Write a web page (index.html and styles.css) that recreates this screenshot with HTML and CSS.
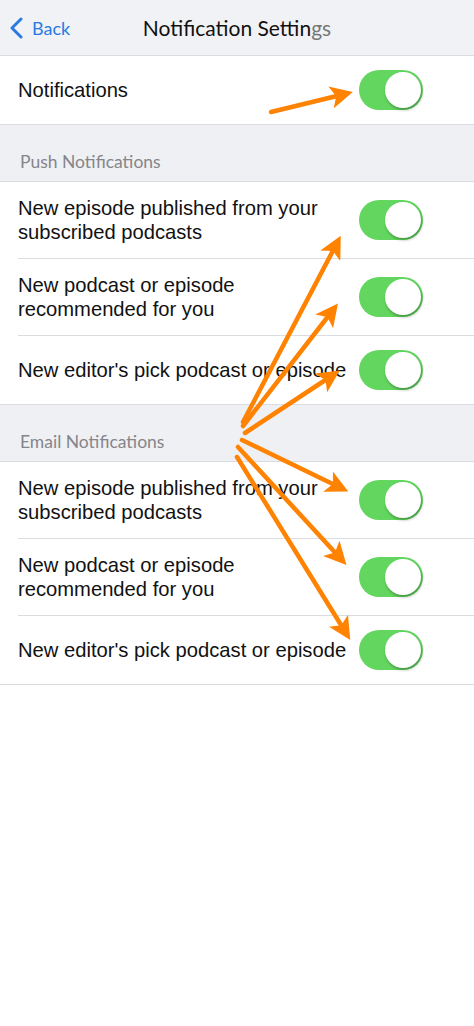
FILE: index.html
```html
<!DOCTYPE html>
<html lang="en">
<head>
  <meta charset="UTF-8">
  <title>Notification Settings</title>
  <link rel="stylesheet" href="styles.css">
</head>
<body>

  <div class="page">
    <div class="navbar">
      <a class="back">
        <svg class="chevron" width="14" height="22" viewBox="0 0 14 22">
          <path d="M12 2 L3 11 L12 20" fill="none" stroke="#2a7ae2" stroke-width="3" stroke-linecap="round" stroke-linejoin="round"/>
        </svg>
        <span>Back</span>
      </a>
      <div class="title">Notification Settin<span class="faded">gs</span></div>
    </div>

    <div class="group">
      <div class="row single">
        <div class="label">Notifications</div>
        <div class="toggle"></div>
      </div>
    </div>

    <div class="section">Push Notifications</div>
    <div class="group">
      <div class="row">
        <div class="label">New episode published from your subscribed podcasts</div>
        <div class="toggle"></div>
      </div>
      <div class="row">
        <div class="label">New podcast or episode<br>recommended for you</div>
        <div class="toggle"></div>
      </div>
      <div class="row single">
        <div class="label">New editor's pick podcast or episode</div>
        <div class="toggle"></div>
      </div>
    </div>

    <div class="section">Email Notifications</div>
    <div class="group">
      <div class="row">
        <div class="label">New episode published from your subscribed podcasts</div>
        <div class="toggle"></div>
      </div>
      <div class="row">
        <div class="label">New podcast or episode<br>recommended for you</div>
        <div class="toggle"></div>
      </div>
      <div class="row single">
        <div class="label">New editor's pick podcast or episode</div>
        <div class="toggle"></div>
      </div>
    </div>

    <!-- annotation arrows drawn over the screenshot -->
    <svg class="arrows" width="474" height="1026" viewBox="0 0 474 1026">
      <defs>
        <marker id="head" markerWidth="5" markerHeight="5" refX="3.2" refY="2.5" orient="auto" markerUnits="strokeWidth">
          <path d="M0 0 L5 2.5 L0 5 L1.2 2.5 Z" fill="#ff8200"/>
        </marker>
      </defs>
      <g stroke="#ff8200" stroke-width="4.5" stroke-linecap="round" fill="none" marker-end="url(#head)">
        <line x1="271" y1="112" x2="345" y2="94"/>
        <line x1="243" y1="422" x2="337" y2="243"/>
        <line x1="243" y1="426" x2="333" y2="310"/>
        <line x1="245" y1="433" x2="333" y2="375"/>
        <line x1="242" y1="440" x2="341" y2="488"/>
        <line x1="238" y1="447" x2="341" y2="559"/>
        <line x1="237" y1="457" x2="346" y2="633"/>
      </g>
    </svg>
  </div>

</body>
</html>
```

FILE: styles.css
```css
body {
  margin: 0;
  background: #fff;
  font-family: "Liberation Sans", Arial, sans-serif;
  color: #111;
}
.page {
  position: relative;
  width: 474px;
  min-height: 1026px;
}
.navbar {
  position: relative;
  height: 55px;
  background: #f1f2f6;
  border-bottom: 1px solid #dcdce0;
  display: flex;
  align-items: center;
  justify-content: center;
  font-family: Lato, "Open Sans", sans-serif;
}
.back {
  position: absolute;
  left: 9px;
  top: 17px;
  display: flex;
  align-items: center;
  gap: 9px;
  color: #2a7ae2;
  font-size: 18px;
}
.title {
  font-size: 21px;
  color: #111;
}
.faded {
  color: #777;
}
.group {
  background: #fff;
  border-bottom: 1px solid #dcdce0;
}
.section {
  height: 57px;
  background: #eff0f4;
  border-bottom: 1px solid #dcdce0;
  display: flex;
  align-items: flex-end;
  padding: 0 20px 9px;
  box-sizing: border-box;
  font-family: Lato, "Open Sans", sans-serif;
  font-size: 17.5px;
  color: #85858a;
}
.row {
  display: flex;
  align-items: center;
  margin-left: 18px;
  padding: 14px 51px 14px 0;
  border-bottom: 1px solid #dcdce0;
}
.row:last-child {
  border-bottom: none;
}
.label {
  flex: 1;
  font-size: 20.2px;
  line-height: 24px;
  padding-right: 8px;
}
.toggle {
  position: relative;
  flex: none;
  width: 64px;
  height: 40px;
  border-radius: 20px;
  background: #62d65e;
}
.toggle::after {
  content: "";
  position: absolute;
  right: 2px;
  top: 2px;
  width: 36px;
  height: 36px;
  border-radius: 50%;
  background: #fff;
  box-shadow: 1px 2px 3px rgba(0, 0, 0, 0.3);
}
.arrows {
  position: absolute;
  left: 0;
  top: 0;
  pointer-events: none;
}
```
